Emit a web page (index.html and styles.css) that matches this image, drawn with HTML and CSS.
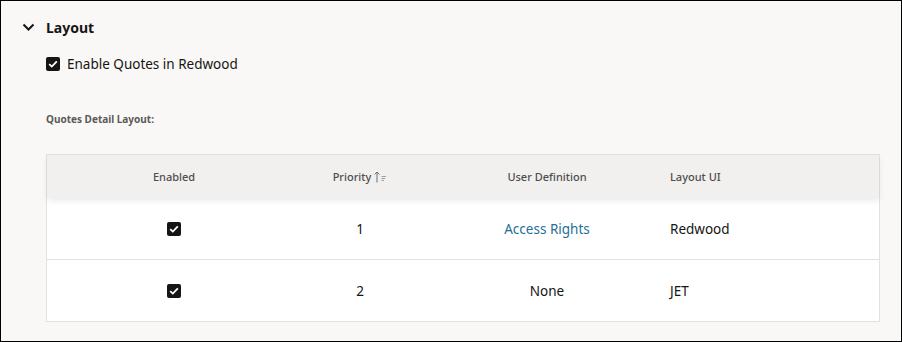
FILE: index.html
```html
<!DOCTYPE html>
<html lang="en">
  <head>
    <meta charset="UTF-8" />
    <meta name="viewport" content="width=device-width, initial-scale=1.0" />
    <title>Layout</title>
    <link rel="stylesheet" href="styles.css">
  </head>

  <body>
    <div class="panel">
      <div class="section-head">
        <svg class="chevron" width="13" height="8" viewBox="0 0 13 8">
          <path d="M1.5 1.5 L6.5 6.5 L11.5 1.5" fill="none" stroke="#161513" stroke-width="2" />
        </svg>
        <span class="section-title">Layout</span>
      </div>

      <div class="section-body">
        <label class="check-row">
          <span class="checkbox">
            <svg width="10" height="8" viewBox="0 0 10 8">
              <path d="M1.2 4.2 L3.8 6.6 L8.8 1.4" fill="none" stroke="#fff" stroke-width="1.8" />
            </svg>
          </span>
          <span>Enable Quotes in Redwood</span>
        </label>

        <div class="field-label">Quotes Detail Layout:</div>

        <div class="table">
          <div class="row head">
            <div class="cell c1">Enabled</div>
            <div class="cell c2">Priority
              <svg class="sort" width="13" height="12" viewBox="0 0 13 12">
                <path d="M3 11.5 V1 M0.5 3.5 L3 1 L5.5 3.5" fill="none" stroke="#6f6f6f" stroke-width="1" />
                <path d="M7.5 5.5 H12 M7.5 7.5 H11 M7.5 9.5 H10" fill="none" stroke="#8a8a8a" stroke-width="0.8" />
              </svg>
            </div>
            <div class="cell c3">User Definition</div>
            <div class="cell c4">Layout UI</div>
          </div>

          <div class="row">
            <div class="cell c1">
              <span class="checkbox">
                <svg width="10" height="8" viewBox="0 0 10 8">
                  <path d="M1.2 4.2 L3.8 6.6 L8.8 1.4" fill="none" stroke="#fff" stroke-width="1.8" />
                </svg>
              </span>
            </div>
            <div class="cell c2">1</div>
            <div class="cell c3"><a href="#" class="link">Access Rights</a></div>
            <div class="cell c4">Redwood</div>
          </div>

          <div class="row">
            <div class="cell c1">
              <span class="checkbox">
                <svg width="10" height="8" viewBox="0 0 10 8">
                  <path d="M1.2 4.2 L3.8 6.6 L8.8 1.4" fill="none" stroke="#fff" stroke-width="1.8" />
                </svg>
              </span>
            </div>
            <div class="cell c2">2</div>
            <div class="cell c3">None</div>
            <div class="cell c4">JET</div>
          </div>
        </div>
      </div>
    </div>
  </body>
</html>
```

FILE: styles.css
```css
body,
html {
  margin: 0;
  padding: 0;
  font-family: "Noto Sans", "Liberation Sans", sans-serif;
  color: #161513;
}

.panel {
  width: 902px;
  height: 342px;
  box-sizing: border-box;
  border: 1px solid #000;
  background-color: #f9f8f6;
  padding: 14px 21px 0 21px;
}

.section-head {
  display: flex;
  align-items: center;
  height: 24px;
}

.chevron {
  margin-right: 11px;
}

.section-title {
  font-size: 14px;
  font-weight: 700;
}

.section-body {
  padding-left: 24px;
}

.check-row {
  display: flex;
  align-items: center;
  gap: 7px;
  height: 20px;
  margin-top: 15px;
  font-size: 13.5px;
}

.checkbox {
  display: inline-flex;
  justify-content: center;
  align-items: center;
  width: 14px;
  height: 14px;
  border-radius: 2px;
  background-color: #161513;
}

.field-label {
  margin-top: 38px;
  height: 14px;
  line-height: 14px;
  font-size: 10px;
  font-weight: 700;
  color: #5b5a58;
}

.table {
  margin-top: 28px;
  border: 1px solid #e3e2e0;
  background-color: #fff;
}

.row {
  display: grid;
  grid-template-columns: 254px 118px 244px 1fr;
  height: 61px;
  align-items: center;
  font-size: 13.5px;
}

.row + .row {
  border-top: 1px solid #e3e2e0;
}

.row.head {
  height: 43px;
  background-color: #f1f0ee;
  font-size: 11px;
  font-weight: 500;
  color: #4f4e4c;
  position: relative;
  box-shadow: 0 3px 6px rgba(0, 0, 0, 0.08);
  border-top: none;
}

.row.head + .row {
  border-top: none;
}

.cell {
  display: flex;
  justify-content: center;
  align-items: center;
}

.c3 {
  padding-left: 12px;
}

.c4 {
  justify-content: flex-start;
  padding-left: 7px;
}

.sort {
  margin-left: 3px;
}

.link {
  color: #1f6f98;
  text-decoration: none;
}
```
